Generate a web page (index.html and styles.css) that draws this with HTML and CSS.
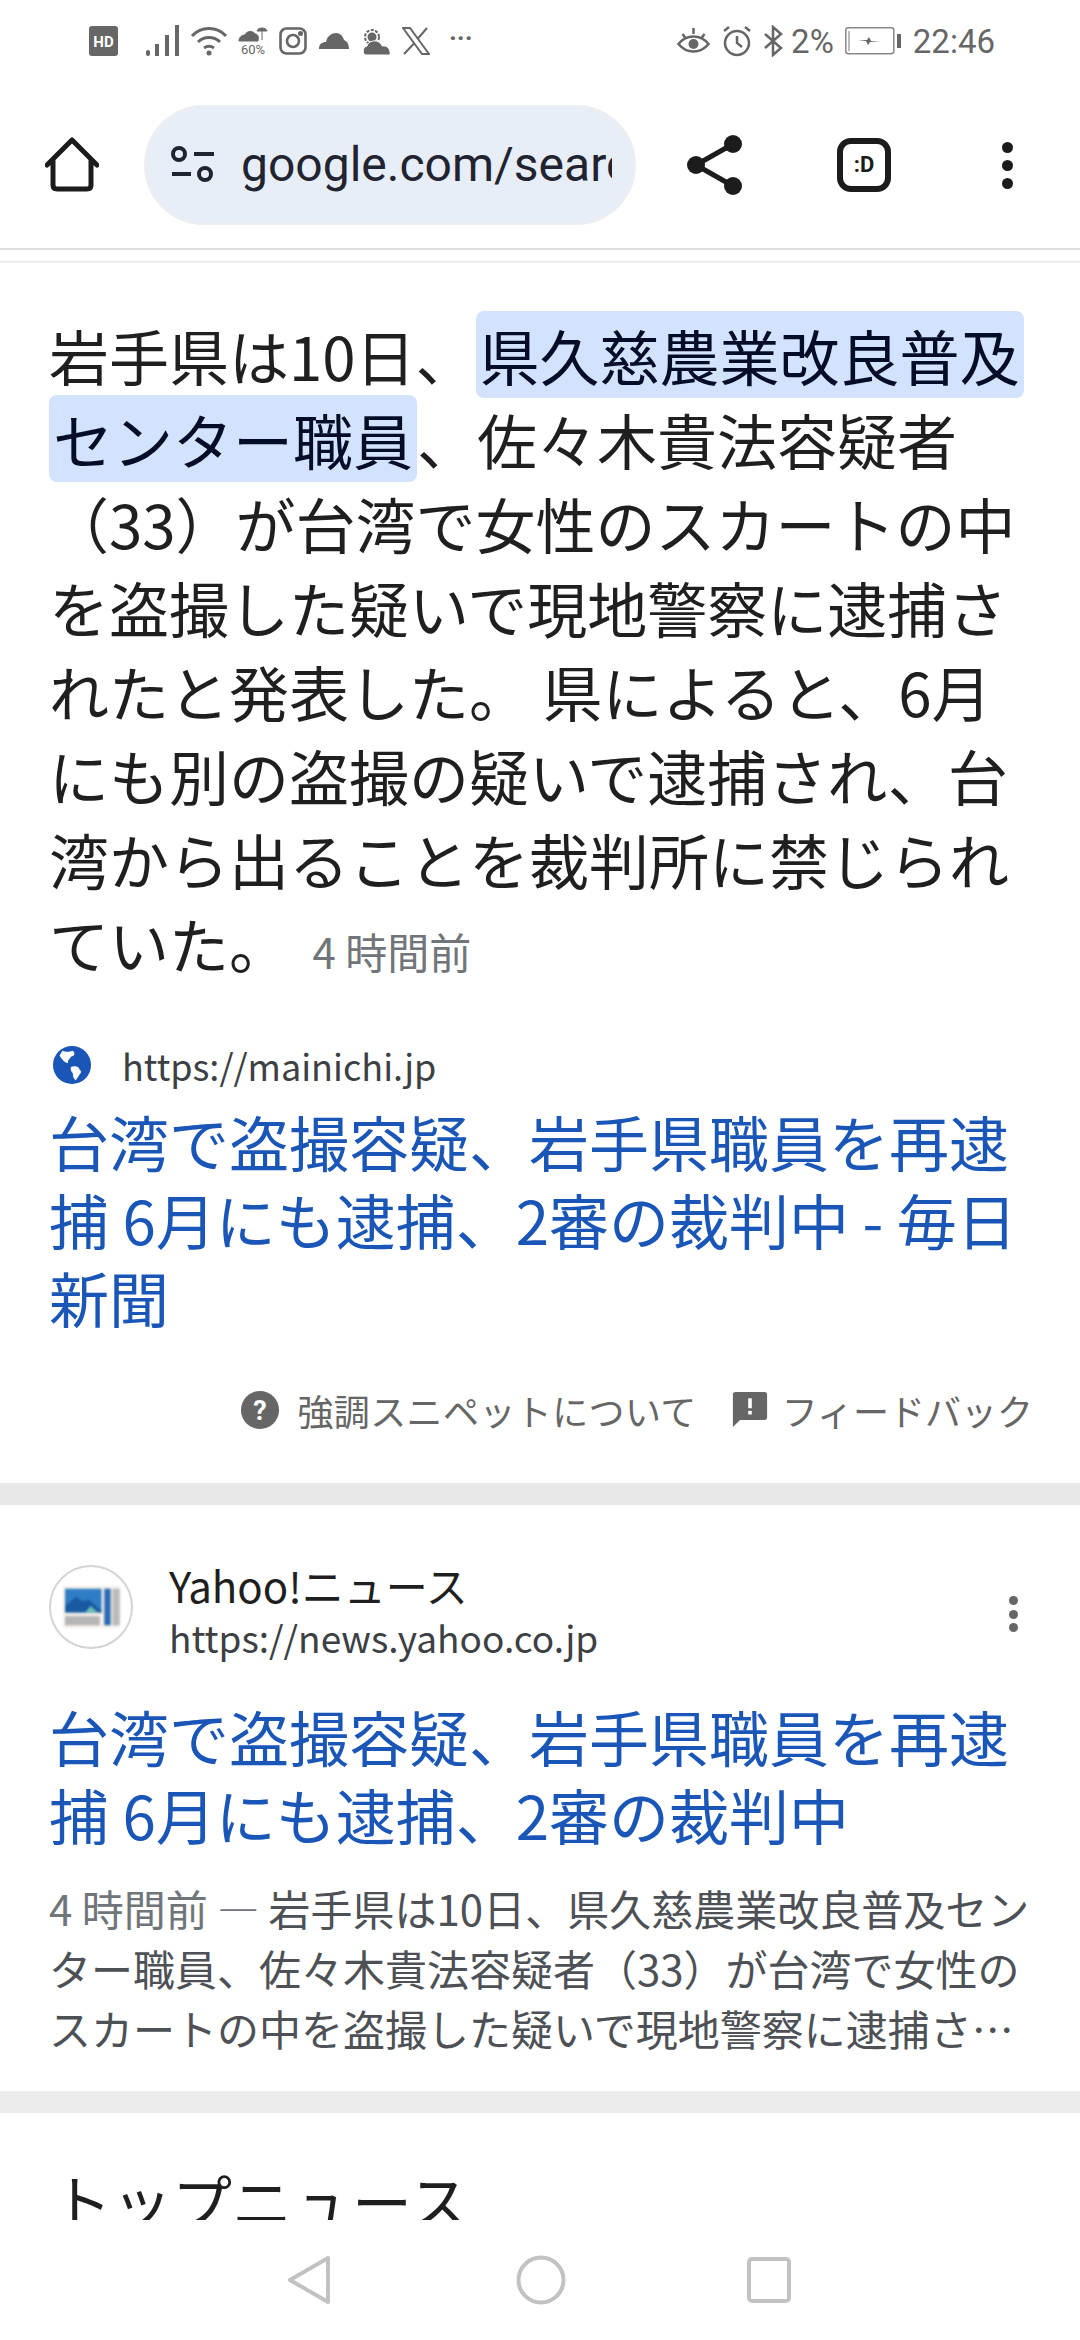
FILE: index.html
```html
<!DOCTYPE html>
<html lang="ja">
<head>
	<meta charset="utf-8">
	<title>Google 検索</title>
	<link rel="stylesheet" href="styles.css">
</head>
<body>
	<div class="status">
		<div class="status-left">
			<svg class="hd" width="30" height="30" viewBox="0 0 30 30"><rect width="29" height="30" rx="3" fill="#666"/><text x="14.5" y="20.5" text-anchor="middle" font-size="15" font-weight="700" fill="#fff" font-family="Roboto">HD</text></svg>
			<svg width="34" height="32" viewBox="0 0 34 32" fill="#666"><rect x="0" y="25" width="4" height="6" rx="2"/><rect x="9" y="19" width="4" height="12"/><rect x="19" y="10" width="4" height="21"/><rect x="29" y="0" width="4" height="31"/></svg>
			<svg width="36" height="30" viewBox="0 0 36 30" fill="none" stroke="#666" stroke-width="3"><path d="M1 10C10 0 26 0 35 10M7 16c6-6 16-6 22 0M13 22c3-2 7-2 10 0"/><circle cx="18" cy="27" r="2.5" fill="#666" stroke="none"/></svg>
			<div class="rain">
				<svg width="30" height="16" viewBox="0 0 30 16" fill="#666"><path d="M1 15c0-4 3-6 6-6 1-4 8-5 10-1 3 0 4 3 3 7zM19 5c1-4 9-4 10 0zM24 5v9" stroke="#666"/></svg>
				<span>60%</span>
			</div>
			<svg width="28" height="28" viewBox="0 0 28 28" fill="none" stroke="#666" stroke-width="2.6"><rect x="1.5" y="1.5" width="25" height="25" rx="6"/><circle cx="14" cy="14" r="6"/><circle cx="21.5" cy="6.5" r="1.2" fill="#666"/></svg>
			<svg width="32" height="18" viewBox="0 0 30 18" fill="#666"><path d="M0 17c0-5 3-7 7-7 1-6 6-9 10-9 4 0 7 3 8 7 3 1 5 4 5 9z"/></svg>
			<svg width="30" height="30" viewBox="0 0 30 30"><circle cx="11" cy="11" r="7" fill="none" stroke="#666" stroke-width="2" stroke-dasharray="3 1.5"/><circle cx="11" cy="11" r="4.5" fill="#666"/><path d="M4 29c-3-3-2-8 2-9 1-5 9-7 13-3 1 1 2 2 2 3 5-1 9 3 8 9z" fill="#666" stroke="#fff" stroke-width="1"/></svg>
			<svg width="28" height="28" viewBox="0 0 28 28"><path d="M1 1h7l19 26h-7zM25 1 15.500 12M12.500 16 2 27" fill="none" stroke="#666" stroke-width="2"/></svg>
			<span class="more">···</span>
		</div>
		<div class="status-right">
			<svg width="33" height="30" viewBox="0 0 32 30" fill="none" stroke="#666" stroke-width="2.500"><path d="M1 18c8-10 22-10 30 0-8 10-22 10-30 0z"/><circle cx="16" cy="18" r="5" fill="#666" stroke="none"/><path d="M5 8l3 4M16 2v6M27 8l-3 4"/></svg>
			<svg width="30" height="32" viewBox="0 0 30 32" fill="none" stroke="#666" stroke-width="2.500"><circle cx="15" cy="18" r="12"/><path d="M15 11v7l5 4M2 6l5-4M28 6l-5-4"/></svg>
			<svg width="20" height="32" viewBox="0 0 20 32" fill="none" stroke="#666" stroke-width="2.500"><path d="M1 9l16 14-8 7V2l8 7L1 23"/></svg>
			<span class="pct">2%</span>
			<svg width="56" height="28" viewBox="0 0 56 28" fill="none"><rect x=".8" y=".8" width="48" height="26" rx="2.500" stroke="#888" stroke-width="1.500"/><rect x="3" y="4" width="2" height="20" fill="#bbb"/><path d="M13 13h9l2-3 2 4h9l-10 1-2 3-2-4z" fill="#666"/><rect x="52" y="7" width="4" height="14" fill="#666"/></svg>
			<span class="clock">22:46</span>
		</div>
	</div>

	<div class="toolbar">
		<svg class="tool-home" width="54" height="56" viewBox="0 0 54 56" fill="none" stroke="#1c1c1c" stroke-width="5" stroke-linejoin="round" stroke-linecap="round"><path d="M2 28 27 3l25 25M8 23v25q0 4 4 4h30q4 0 4-4V23"/></svg>
		<div class="omnibox">
			<svg width="44" height="40" viewBox="0 0 44 40" fill="none" stroke="#1f2430" stroke-width="4"><circle cx="9" cy="9" r="6"/><path d="M24 9h20M2 29h19"/><circle cx="35" cy="29" r="6"/></svg>
			<span class="url-clip">google.com/search</span>
		</div>
		<svg class="tool-share" width="56" height="60" viewBox="0 0 56 60" fill="#1c1c1c"><circle cx="9" cy="30" r="9"/><circle cx="46" cy="9" r="9"/><circle cx="46" cy="51" r="9"/><path d="M9 30 46 9M9 30l37 21" stroke="#1c1c1c" stroke-width="5"/></svg>
		<div class="tabs">:D</div>
		<div class="dots"><i></i><i></i><i></i></div>
	</div>

	<div class="page">
		<div class="snippet">
			<p class="lead">岩手県は10日、<span class="hl">県久慈農業改良普及センター職員</span>、佐々木貴法容疑者（33）が台湾で女性のスカートの中を盗撮した疑いで現地警察に逮捕されたと発表した。 県によると、6月にも別の盗撮の疑いで逮捕され、台湾から出ることを裁判所に禁じられていた。 <span class="ago">4 時間前</span></p>
			<div class="src">
				<svg width="40" height="40" viewBox="0 0 42 42"><circle cx="21" cy="21" r="20" fill="#1a56b8"/><path d="M11 6c4 2 7 1 11 0 3 3 1 6-2 6-1 3-4 3-3 7-3 0-7-4-9-8zM20 23c4-2 9 0 9 3 2 1 2 3 0 5l-4 6c-3-2-3-5-3-7-2-2-3-5-2-7z" fill="#fff"/></svg>
				<span>https://mainichi.jp</span>
			</div>
			<a class="title">台湾で盗撮容疑、岩手県職員を再逮捕 6月にも逮捕、2審の裁判中 - 毎日新聞</a>
			<div class="foot">
				<svg width="40" height="40" viewBox="0 0 42 42"><circle cx="21" cy="21" r="20" fill="#666"/><text x="21" y="31" text-anchor="middle" font-size="29" font-weight="700" fill="#fff" font-family="Roboto">?</text></svg>
				<span class="foot-label">強調スニペットについて</span>
				<svg class="foot-flag" width="36" height="36" viewBox="0 0 38 40"><path d="M3 0h32q3 0 3 3v25q0 3-3 3H8l-8 8V3q0-3 3-3z" fill="#666"/><rect x="17" y="7" width="4" height="11" fill="#fff"/><rect x="17" y="21" width="4" height="4" fill="#fff"/></svg>
				<span>フィードバック</span>
			</div>
		</div>
		<div class="result">
			<div class="site">
				<div class="favicon">
					<svg width="57" height="42" viewBox="0 0 62 46"><rect x="0" y="0" width="62" height="46" fill="#f6f0ea"/><rect x="2" y="3" width="40" height="26" fill="#2f7dc4"/><path d="M2 22 14 12l8 5 6-2 14 12v2H2z" fill="#1a5aa0"/><path d="M24 29l6-7 8 7z" fill="#6fc0b8"/><rect x="45" y="3" width="7" height="40" fill="#2a6ab4"/><rect x="54" y="3" width="8" height="40" fill="#bbb"/><rect x="2" y="33" width="38" height="10" fill="#b5b5b5"/></svg>
				</div>
				<div class="site-text">
					<div class="site-name">Yahoo!ニュース</div>
					<div class="site-url">https://news.yahoo.co.jp</div>
				</div>
				<div class="dots dots-small"><i></i><i></i><i></i></div>
			</div>
			<a class="title">台湾で盗撮容疑、岩手県職員を再逮捕 6月にも逮捕、2審の裁判中</a>
			<p class="desc"><span class="desc-ago">4 時間前 — </span>岩手県は10日、県久慈農業改良普及センター職員、佐々木貴法容疑者（33）が台湾で女性のスカートの中を盗撮した疑いで現地警察に逮捕さ…</p>
		</div>
		<h2 class="top-news">トップニュース</h2>
	</div>

	<div class="navbar">
		<svg width="44" height="50" viewBox="0 0 44 50" fill="none" stroke="#c2c2c2" stroke-width="4" stroke-linejoin="round"><path d="M41 3v44L3 25z"/></svg>
		<svg width="50" height="50" viewBox="0 0 50 50" fill="none" stroke="#c2c2c2" stroke-width="4"><circle cx="25" cy="25" r="22.500"/></svg>
		<svg width="44" height="46" viewBox="0 0 44 46" fill="none" stroke="#c2c2c2" stroke-width="4"><rect x="2" y="2" width="40" height="42" rx="3"/></svg>
	</div>
</body>
</html>
```

FILE: styles.css
```css
* {
	box-sizing: border-box;
}
html, body {
	margin: 0;
	padding: 0;
}
body {
	width: 1080px;
	height: 2340px;
	overflow: hidden;
	position: relative;
	background: #fff;
	color: #1f1f1f;
	font-family: "Noto Sans CJK JP", "Noto Sans", sans-serif;
}
svg {
	display: block;
	flex: none;
}

/* status bar */
.status {
	height: 75px;
	padding: 20px 85px 0 89px;
	display: flex;
	justify-content: space-between;
	align-items: flex-start;
	color: #666;
}
.status-left, .status-right {
	display: flex;
	align-items: center;
	height: 42px;
}
.status-left {
	gap: 11px;
}
.status-left .hd {
	margin-right: 16px;
}
.rain {
	display: flex;
	flex-direction: column;
	align-items: center;
	width: 30px;
	gap: 1px;
}
.rain span {
	font: 13px/14px Roboto, sans-serif;
}
.more {
	font: 700 26px/30px Roboto, sans-serif;
	margin-left: 8px;
	margin-bottom: 6px;
}
.status-right {
	gap: 12px;
	font-family: Roboto, sans-serif;
	font-size: 33px;
}
.pct {
	margin-left: -5px;
	margin-right: -1px;
}

/* toolbar */
.toolbar {
	height: 175px;
	padding: 7px 0 0 45px;
	display: flex;
	align-items: center;
	border-bottom: 2px solid #dedede;
	position: relative;
}
.omnibox {
	margin-left: 45px;
	width: 492px;
	height: 120px;
	border-radius: 60px;
	background: #e8eef7;
	border: 2px solid #eeeef0;
	padding-left: 24px;
	display: flex;
	align-items: center;
	gap: 27px;
	flex: none;
}
.url-clip {
	width: 371px;
	overflow: hidden;
	white-space: nowrap;
	font: 48px/60px Roboto, sans-serif;
	color: #1f2430;
}
.tool-share {
	margin-left: 51px;
}
.tabs {
	margin-left: 94px;
	width: 54px;
	height: 54px;
	border: 6px solid #1c1c1c;
	border-radius: 14px;
	font: 700 22px/42px Roboto, sans-serif;
	text-align: center;
	color: #1c1c1c;
}
.dots {
	margin-left: 111px;
	display: flex;
	flex-direction: column;
	gap: 7px;
}
.dots i {
	display: block;
	width: 11px;
	height: 11px;
	border-radius: 50%;
	background: #1c1c1c;
}

/* page */
.page {
	border-top: 2px solid #ececec;
	margin-top: 11px;
}
.snippet {
	padding: 50px 40px 0 49px;
}
.lead {
	margin: 0;
	font-size: 60px;
	line-height: 84px;
	color: #1f1f1f;
}
.hl {
	background: #d3e3fd;
	color: #040c28;
	padding: 0 4px;
	border-radius: 8px;
	-webkit-box-decoration-break: clone;
	box-decoration-break: clone;
}
.ago {
	font-size: 42px;
	line-height: 1;
	color: #70757a;
	margin-left: 10px;
}
.src {
	margin-top: 50px;
	height: 60px;
	display: flex;
	align-items: center;
	gap: 30px;
	font-size: 36px;
	color: #3c4043;
}
.src svg {
	margin-left: 3px;
}
.title {
	display: block;
	margin-top: 7px;
	font-size: 60px;
	line-height: 78px;
	color: #1a56b8;
}
.foot {
	margin-top: 53px;
	margin-right: 7px;
	padding-bottom: 52px;
	display: flex;
	justify-content: flex-end;
	align-items: center;
	gap: 17px;
	font-size: 36px;
	line-height: 42px;
	color: #666;
}
.foot-flag {
	margin-left: 18px;
	margin-right: -3px;
}
.foot-label {
	letter-spacing: 0.4px;
}
.result {
	border-top: 22px solid #e8e8e8;
	padding: 59px 40px 33px 49px;
	border-bottom: 22px solid #ebebeb;
}
.site {
	display: flex;
	align-items: center;
	height: 86px;
}
.favicon {
	width: 84px;
	height: 84px;
	border-radius: 50%;
	border: 2px solid #d4d4d4;
	display: flex;
	align-items: center;
	justify-content: center;
	margin-right: 36px;
}
.favicon svg {
	filter: blur(0.8px);
}
.site-text {
	flex: 1;
	margin-top: 8px;
}
.site-name {
	font-size: 42px;
	line-height: 48px;
	color: #1f1f1f;
}
.site-url {
	margin-top: 4px;
	font-size: 37px;
	line-height: 48px;
	color: #3c4043;
}
.dots-small {
	margin: 14px 22px 0 0;
	gap: 4.5px;
}
.dots-small i {
	width: 9px;
	height: 9px;
	background: #666;
}
.result .title {
	margin-top: 47px;
}
.desc {
	margin: 25px 0 0;
	font-size: 42px;
	line-height: 60px;
	color: #4d5156;
}
.desc-ago {
	color: #70757a;
}
.top-news {
	margin: 52px 0 0 52px;
	font-size: 60px;
	line-height: 70px;
	font-weight: 400;
	color: #1f1f1f;
}

/* nav bar */
.navbar {
	position: absolute;
	left: 0;
	right: 0;
	bottom: 0;
	height: 120px;
	background: #fff;
	padding: 0 0 0 287px;
	display: flex;
	align-items: center;
}
.navbar svg:nth-child(2) {
	margin-left: 185px;
}
.navbar svg:nth-child(3) {
	margin-left: 181px;
}
```
